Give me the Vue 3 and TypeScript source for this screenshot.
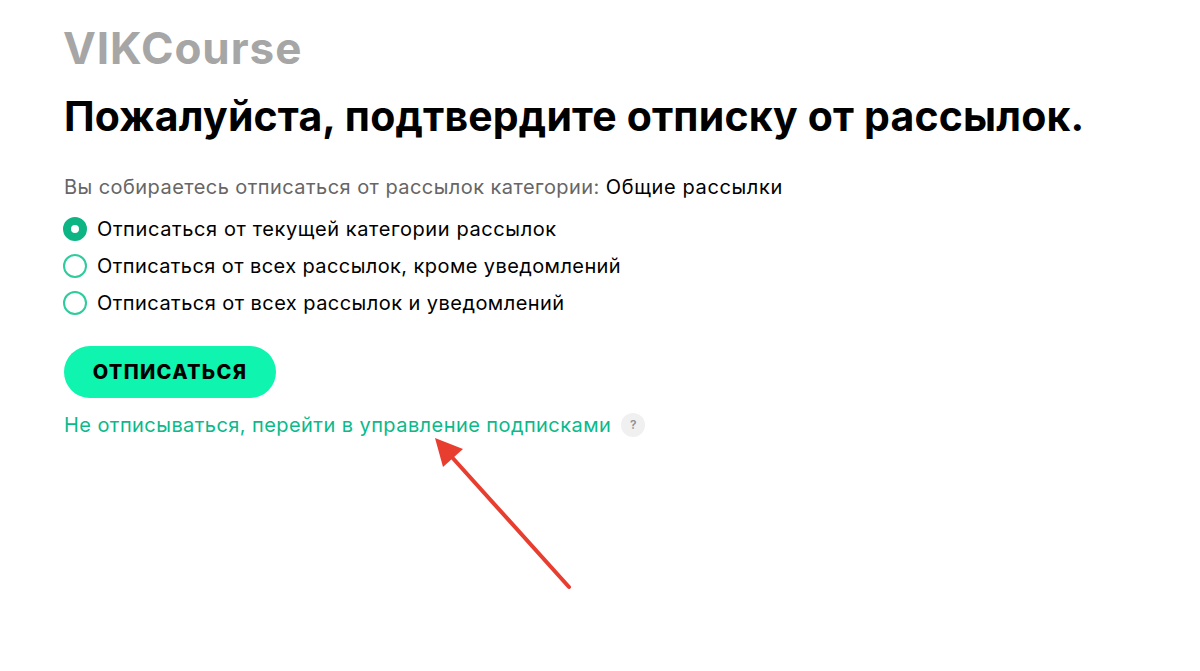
<script setup lang="ts">
const options = [
  { label: 'Отписаться от текущей категории рассылок', checked: true },
  { label: 'Отписаться от всех рассылок, кроме уведомлений', checked: false },
  { label: 'Отписаться от всех рассылок и уведомлений', checked: false },
]
</script>

<template>
  <div class="page">
    <div class="logo">VIKCourse</div>
    <h1 class="title">Пожалуйста, подтвердите отписку от рассылок.</h1>
    <p class="lead">Вы собираетесь отписаться от рассылок категории: <span class="cat">Общие рассылки</span></p>
    <div class="options">
      <label v-for="o in options" :key="o.label" class="option">
        <span class="radio" :class="{ on: o.checked }"></span>
        <span>{{ o.label }}</span>
      </label>
    </div>
    <button class="btn" type="button">ОТПИСАТЬСЯ</button>
    <div class="manage">
      <a class="link">Не отписываться, перейти в управление подписками</a>
      <span class="help">?</span>
    </div>
    <svg class="arrow" width="1200" height="671" viewBox="0 0 1200 671">
      <line x1="569" y1="587" x2="450" y2="455" stroke="#e83e30" stroke-width="4" stroke-linecap="round" />
      <polygon points="435,438 463,449 443,467" fill="#e83e30" />
    </svg>
  </div>
</template>

<style scoped>
.page {
  position: relative;
  width: 1200px;
  height: 671px;
  box-sizing: border-box;
  padding: 25px 0 0 64px;
  overflow: hidden;
  background: #fff;
  color: #000;
  font-family: "Inter", "Noto Sans", sans-serif;
}
.logo {
  height: 46px;
  font-size: 44px;
  line-height: 46px;
  font-weight: 700;
  color: #a6a6a6;
  letter-spacing: 0.95px;
  text-indent: -1px;
}
.title {
  margin: 20px 0 0;
  font-size: 41px;
  line-height: 50px;
  font-weight: 700;
  letter-spacing: 0.17px;
  white-space: nowrap;
}
.lead {
  margin: 32px 0 0;
  font-size: 20px;
  line-height: 28px;
  color: #666;
  letter-spacing: 0.44px;
  white-space: nowrap;
}
.cat {
  color: #000;
  letter-spacing: 0.62px;
}
.options {
  display: flex;
  flex-direction: column;
  gap: 9px;
  margin-top: 14px;
}
.option {
  display: flex;
  align-items: center;
  gap: 10px;
  height: 28px;
  font-size: 20px;
  line-height: 28px;
  letter-spacing: 0.45px;
  white-space: nowrap;
}
.option:nth-child(1) { letter-spacing: 0.6px; }
.option:nth-child(2) { letter-spacing: 0.41px; }
.radio {
  width: 24px;
  height: 24px;
  margin-left: -1px;
  box-sizing: border-box;
  border: 2px solid #2ecb9c;
  border-radius: 50%;
  background: #fff;
}
.radio.on {
  border: 8px solid #0db585;
}
.btn {
  display: block;
  width: 212px;
  height: 52px;
  margin-top: 29px;
  padding: 0;
  border: 0;
  border-radius: 26px;
  background: #0ff4ae;
  color: #000;
  font-family: inherit;
  font-size: 20px;
  font-weight: 800;
  letter-spacing: 1.3px;
}
.manage {
  display: flex;
  align-items: center;
  gap: 10px;
  height: 28px;
  margin-top: 13px;
}
.link {
  font-size: 20px;
  line-height: 28px;
  color: #0bb98a;
  letter-spacing: 0.43px;
  white-space: nowrap;
}
.help {
  width: 24px;
  height: 24px;
  border-radius: 50%;
  background: #f0f0f0;
  color: #8f8f96;
  font-size: 12px;
  font-weight: 600;
  line-height: 24px;
  text-align: center;
}
.arrow {
  position: absolute;
  left: 0;
  top: 0;
  pointer-events: none;
}
</style>
